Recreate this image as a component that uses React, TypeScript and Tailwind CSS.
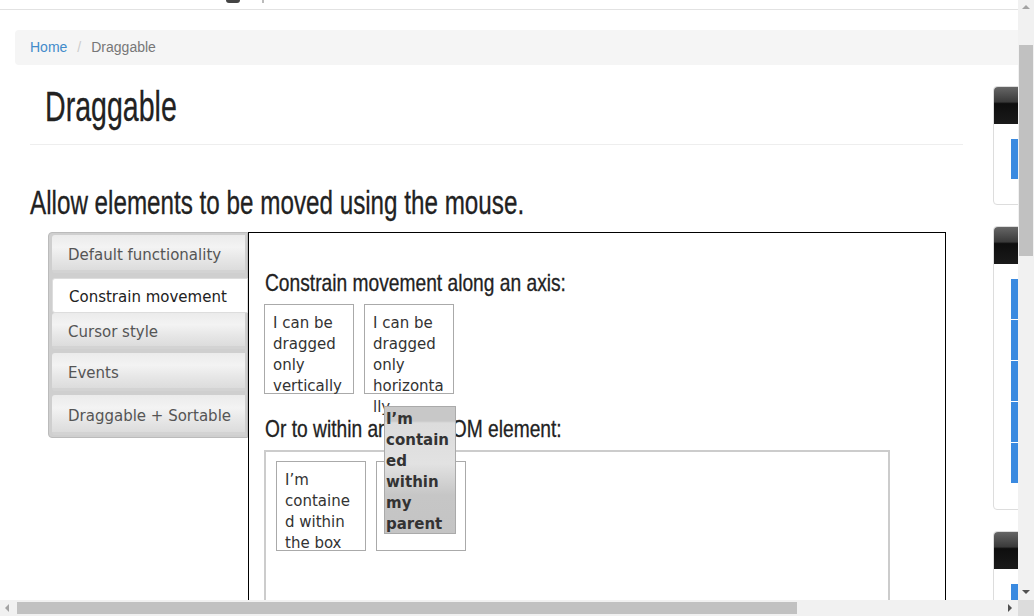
import React from "react";

/* ------------------------------------------------------------------ */
/*  Helpers                                                            */
/* ------------------------------------------------------------------ */

const verdana = "font-['DejaVu_Sans',Verdana,sans-serif]";

const tabs = [
  { label: "Default functionality", h: "h-[38px]", gap: "" },
  { label: "Constrain movement", h: "h-[35px]", gap: "mt-[5px]" },
  { label: "Cursor style", h: "h-[36px]", gap: "" },
  { label: "Events", h: "h-[38px]", gap: "mt-[4px]" },
  { label: "Draggable + Sortable", h: "h-[40px]", gap: "mt-[4px]" },
];

// Oswald isn't installed, so squeeze Liberation Sans to get the narrow headline look.
function Narrow({ children, squeeze }: { children: React.ReactNode; squeeze: string }) {
  return (
    <span
      className={`inline-block origin-left whitespace-nowrap font-['Liberation_Sans',Arial,sans-serif] text-[#222] [-webkit-text-stroke:0.3px_#222] ${squeeze}`}
    >
      {children}
    </span>
  );
}

function DragBox({ children }: { children?: React.ReactNode }) {
  return (
    <div
      className={`h-[90px] w-[90px] shrink-0 break-words border border-[#aaa] bg-white px-[8px] pt-[8px] text-[15px] leading-[21px] text-[#333] ${verdana}`}
    >
      {children}
    </div>
  );
}

function Widget({ bars, height }: { bars: number; height: number }) {
  return (
    <div className="w-[200px] rounded-[4px] border border-[#ddd] bg-white" style={{ height }}>
      <div className="h-[37px] rounded-t-[4px] bg-[linear-gradient(#666,#3a3a3a_40%,#0e0e0e_45%,#1a1a1a)]" />
      <div className="flex flex-col gap-px pl-[17px] pt-[15px]">
        {Array.from({ length: bars }).map((_, i) => (
          <div key={i} className="h-[40px] w-[180px] bg-[#3a8ae0]" />
        ))}
      </div>
    </div>
  );
}

/* ------------------------------------------------------------------ */
/*  Page                                                               */
/* ------------------------------------------------------------------ */

export default function App() {
  return (
    <div className="relative flex h-[616px] w-[1034px] flex-col overflow-hidden bg-white font-['Liberation_Sans',Arial,sans-serif]">
      <div className="flex h-[600px]">
        {/* page viewport */}
        <div className="relative w-[1018px] overflow-hidden">
          {/* top nav remnant */}
          <div className="relative h-[10px] border-b border-[#e2e2e2]">
            <div className="absolute left-[226px] top-0 h-[3px] w-[14px] rounded-b-[3px] bg-[#444]" />
            <div className="absolute left-[262px] top-0 h-[3px] w-[2px] bg-[#bbb]" />
          </div>

          {/* breadcrumb */}
          <div className="ml-[15px] mt-[20px] flex h-[35px] w-[1020px] items-center gap-[10px] rounded-[4px] bg-[#f5f5f5] px-[15px] text-[14px]">
            <span className="text-[#428bca]">Home</span>
            <span className="text-[#ccc]">/</span>
            <span className="text-[#777]">Draggable</span>
          </div>

          <div className="flex">
            {/* main column */}
            <div className="ml-[30px] w-[933px] shrink-0">
              <div className="border-b border-[#eee] pb-[12px] pl-[15px] pt-[17px]">
                <h1 className="text-[42px] leading-[50px]">
                  <Narrow squeeze="scale-x-[0.68]">Draggable</Narrow>
                </h1>
              </div>

              <h2 className="mt-[40px] text-[33px] leading-[36px]">
                <Narrow squeeze="scale-x-[0.734]">Allow elements to be moved using the mouse.</Narrow>
              </h2>

              <div className="mt-[11px] flex">
                {/* tabs */}
                <div className="ml-[18px] flex h-[206px] w-[200px] flex-col rounded-l-[4px] border border-[#bbb] bg-[#cfcfcf] pl-[3px] pt-[2px]">
                  {tabs.map((t, i) =>
                    i === 1 ? (
                      <div
                        key={t.label}
                        className={`-mr-px flex items-center rounded-l-[3px] border border-[#ddd] bg-white pl-[16px] pt-[3px] text-[15px] text-[#222] ${t.h} ${t.gap} ${verdana}`}
                      >
                        {t.label}
                      </div>
                    ) : (
                      <div
                        key={t.label}
                        className={`mr-[2px] flex items-center rounded-l-[3px] border-b-[3px] border-[#d3d3d3] bg-[linear-gradient(#ebebeb,#f3f3f3_35%,#e6e6e6_70%,#dcdcdc)] pl-[16px] pt-[5px] text-[15px] text-[#555] ${t.h} ${t.gap} ${verdana}`}
                      >
                        {t.label}
                      </div>
                    )
                  )}
                </div>

                {/* content panel */}
                <div className="relative h-[400px] w-[698px] border border-black bg-white pl-[15px] pt-[35px]">
                  <h3 className="pl-px text-[24px] leading-[30px]">
                    <Narrow squeeze="scale-x-[0.80]">Constrain movement along an axis:</Narrow>
                  </h3>
                  <div className="mt-[6px] flex gap-[10px]">
                    <DragBox>I can be dragged only vertically</DragBox>
                    <DragBox>I can be dragged only horizontally</DragBox>
                  </div>
                  <h3 className="mt-[20px] pl-px text-[24px] leading-[30px]">
                    <Narrow squeeze="scale-x-[0.80]">Or to within another DOM element:</Narrow>
                  </h3>
                  <div className="mt-[6px] flex h-[160px] w-[626px] gap-[10px] border-2 border-[#ccc] pl-[10px] pt-[9px]">
                    <DragBox>I’m contained within the box</DragBox>
                    <DragBox />
                  </div>

                  {/* item being dragged */}
                  <div
                    className={`absolute left-[135px] top-[173px] h-[128px] w-[72px] break-words border border-[#aaa] bg-[linear-gradient(#c8c8c8_0px,#c8c8c8_14px,#dcdcdc_16px,#e2e2e2_45%,#c6c6c6_70%,#c4c4c4)] pl-[1px] pt-[2px] text-[15px] font-bold leading-[21px] text-[#333] ${verdana}`}
                  >
                    I’m contained within my parent
                  </div>
                </div>
              </div>
            </div>

            {/* sidebar */}
            <div className="ml-[30px] mt-[21px] flex w-[200px] shrink-0 flex-col gap-[21px]">
              <Widget bars={1} height={119} />
              <Widget bars={5} height={284} />
              <Widget bars={1} height={120} />
            </div>
          </div>
        </div>

        {/* vertical scrollbar */}
        <div className="relative w-[16px] bg-[#f1f1f1]">
          <div className="absolute left-[4px] top-[5px] h-0 w-0 border-x-[4px] border-b-[4px] border-x-transparent border-b-[#a3a3a3]" />
          <div className="absolute left-[1px] top-[45px] h-[211px] w-[14px] bg-[#c1c1c1]" />
          <div className="absolute bottom-[6px] left-[4px] h-0 w-0 border-x-[4px] border-t-[4px] border-x-transparent border-t-[#505050]" />
        </div>
      </div>

      {/* horizontal scrollbar */}
      <div className="relative flex h-[16px]">
        <div className="relative w-[1018px] bg-[#f1f1f1]">
          <div className="absolute left-[5px] top-[4px] h-0 w-0 border-y-[4px] border-r-[4px] border-y-transparent border-r-[#a3a3a3]" />
          <div className="absolute left-[17px] top-[2px] h-[12px] w-[780px] bg-[#c1c1c1]" />
          <div className="absolute right-[6px] top-[4px] h-0 w-0 border-y-[4px] border-l-[4px] border-y-transparent border-l-[#505050]" />
        </div>
        <div className="w-[16px] bg-[#dcdcdc]" />
      </div>
    </div>
  );
}
